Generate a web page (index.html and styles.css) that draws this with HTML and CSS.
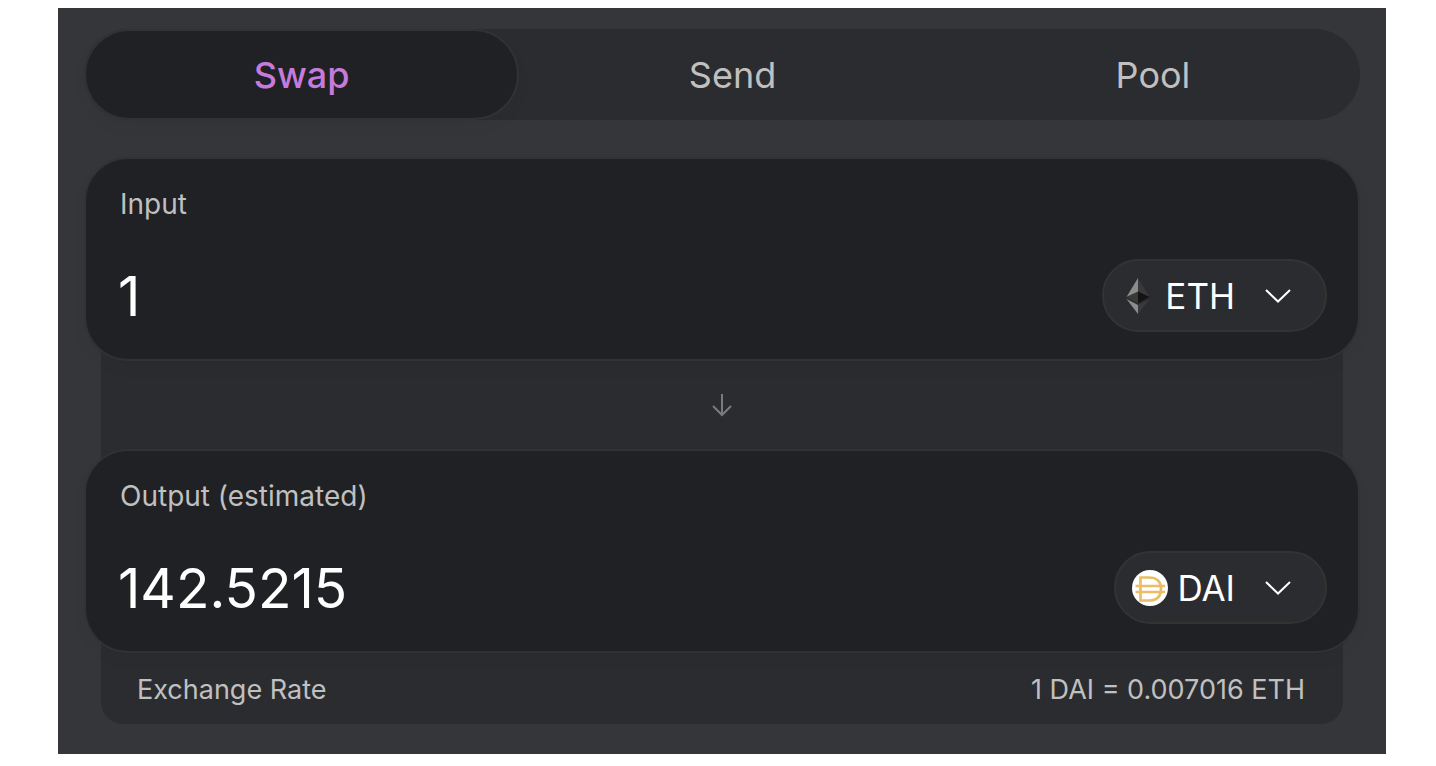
FILE: index.html
```
<!DOCTYPE html>
<html lang="en">
<head>
<meta charset="UTF-8">
<meta name="viewport" content="width=device-width, initial-scale=1.0">
<title>Swap</title>
<link rel="stylesheet" href="styles.css">
</head>
<body>

<main class="exchange">

  <nav class="tabs">
    <a href="#swap" class="tab active" aria-current="page">Swap</a>
    <a href="#send" class="tab">Send</a>
    <a href="#pool" class="tab">Pool</a>
  </nav>

  <form>
    <!-- Input currency -->
    <section class="card">
      <label class="card-label" for="inputAmount">Input</label>
      <div class="card-row">
        <input class="amount" type="text" inputmode="decimal" id="inputAmount" name="inputAmount" value="1">
        <div class="token">
          <svg class="token-icon" viewBox="0 0 36 36" aria-hidden="true">
            <path d="M18 0 L6.500 19 L18 14z" fill="#8c8c8c"/>
            <path d="M18 0 L29.500 19 L18 14z" fill="#393939"/>
            <path d="M6.500 19 L18 13.500 V25.500z" fill="#393939"/>
            <path d="M29.500 19 L18 13.500 V25.500z" fill="#141414"/>
            <path d="M6.500 21 L18 27 V36z" fill="#8c8c8c"/>
            <path d="M29.500 21 L18 27 V36z" fill="#393b3b"/>
          </svg>
          <select name="inputToken" aria-label="Input token">
            <option selected>ETH</option>
            <option>DAI</option>
          </select>
          <svg class="chevron" viewBox="0 0 26 14" aria-hidden="true">
            <path d="M1 1 L13 12.500 L25 1"/>
          </svg>
        </div>
      </div>
    </section>

    <div class="direction">
      <svg class="arrow" viewBox="0 0 20 24" aria-hidden="true">
        <path d="M10 1 V22 M1 13 L10 22 L19 13"/>
      </svg>
    </div>

    <!-- Output currency -->
    <section class="card">
      <label class="card-label" for="outputAmount">Output (estimated)</label>
      <div class="card-row">
        <input class="amount" type="text" inputmode="decimal" id="outputAmount" name="outputAmount" value="142.5215">
        <div class="token">
          <svg class="token-icon" viewBox="0 0 36 36" aria-hidden="true">
            <circle cx="18" cy="18" r="18" fill="#fff"/>
            <g fill="none" stroke="#ebbd65" stroke-width="2.700">
              <path d="M8.500 7.500 H17 C25 7.500 29 12 29 18.500 C29 26 25 30.500 17 30.500 H8.500z"/>
              <path d="M3.500 16 H33 M3.500 22 H33"/>
            </g>
          </svg>
          <select name="outputToken" aria-label="Output token">
            <option>ETH</option>
            <option selected>DAI</option>
          </select>
          <svg class="chevron" viewBox="0 0 26 14" aria-hidden="true">
            <path d="M1 1 L13 12.500 L25 1"/>
          </svg>
        </div>
      </div>
    </section>

    <div class="rate">
      <span>Exchange Rate</span>
      <span>1 DAI = 0.007016 ETH</span>
    </div>
  </form>

</main>

</body>
</html>
```
FILE: styles.css
```
* {
    box-sizing: border-box;
}
body {
    margin: 8px 50px 12px 58px;
    background-color: #fff;
    font-family: Inter, sans-serif;
    font-size: 27px;
    line-height: 34px;
    color: #c0c0c0;
}
.exchange {
    padding: 21px 26px 30px;
    background-color: #35363a;
}

/* Tabs */
.tabs {
    display: flex;
    margin-bottom: 37px;
    border-radius: 46px;
    background-color: #2b2c2f;
}
.tab {
    flex: 1 0 auto;
    padding: 22px 0 21px;
    border: 2px solid transparent;
    border-radius: 46px;
    font-size: 36px;
    line-height: 44px;
    text-align: center;
    text-decoration: none;
    color: #c0c0c0;
}
.tab.active {
    border-color: #313231;
    background-color: #202124;
    box-shadow: 0 8px 16px rgba(0, 0, 0, 0.03);
    font-weight: 500;
    color: #c67bdc;
}

/* Currency cards */
.card {
    position: relative;
    z-index: 1;
    padding: 28px 31px 27px 34px;
    border: 2px solid #313231;
    border-radius: 44px;
    background-color: #202124;
    box-shadow: 0 8px 16px rgba(0, 0, 0, 0.03);
}
.card-label {
    display: block;
    margin-bottom: 38px;
    font-size: 28px;
}
.card-row {
    display: flex;
    align-items: center;
}
.amount {
    flex: 1;
    min-width: 0;
    margin-left: -2px;
    padding: 0;
    border: none;
    outline: none;
    background: none;
    font-family: inherit;
    font-size: 55px;
    line-height: 66px;
    color: #fff;
}

/* Token picker */
.token {
    position: relative;
    display: flex;
    align-items: center;
    padding-left: 16px;
    border: 2px solid #333432;
    border-radius: 37px;
    background-color: #2b2c2f;
}
.token-icon {
    width: 36px;
    height: 36px;
}
.token select {
    height: 69px;
    padding: 0 90px 0 9px;
    border: none;
    outline: none;
    appearance: none;
    field-sizing: content;
    background: none;
    font-family: inherit;
    font-size: 35px;
    color: #fff;
    cursor: pointer;
}
.token option {
    background-color: #2b2c2f;
}
.chevron {
    position: absolute;
    right: 34px;
    width: 26px;
    height: 14px;
    fill: none;
    stroke: #fff;
    stroke-width: 2;
    pointer-events: none;
}

/* Strips that run behind the cards */
.direction {
    display: flex;
    justify-content: center;
    margin: -44px 17px;
    padding: 76px 0;
    background-color: #2b2c2f;
}
.arrow {
    width: 20px;
    height: 24px;
    fill: none;
    stroke: #7b7b7c;
    stroke-width: 2;
}
.rate {
    display: flex;
    justify-content: space-between;
    margin: -44px 17px 0;
    padding: 64px 38px 17px 36px;
    border-radius: 0 0 22px 22px;
    background-color: #2b2c2f;
}
```
